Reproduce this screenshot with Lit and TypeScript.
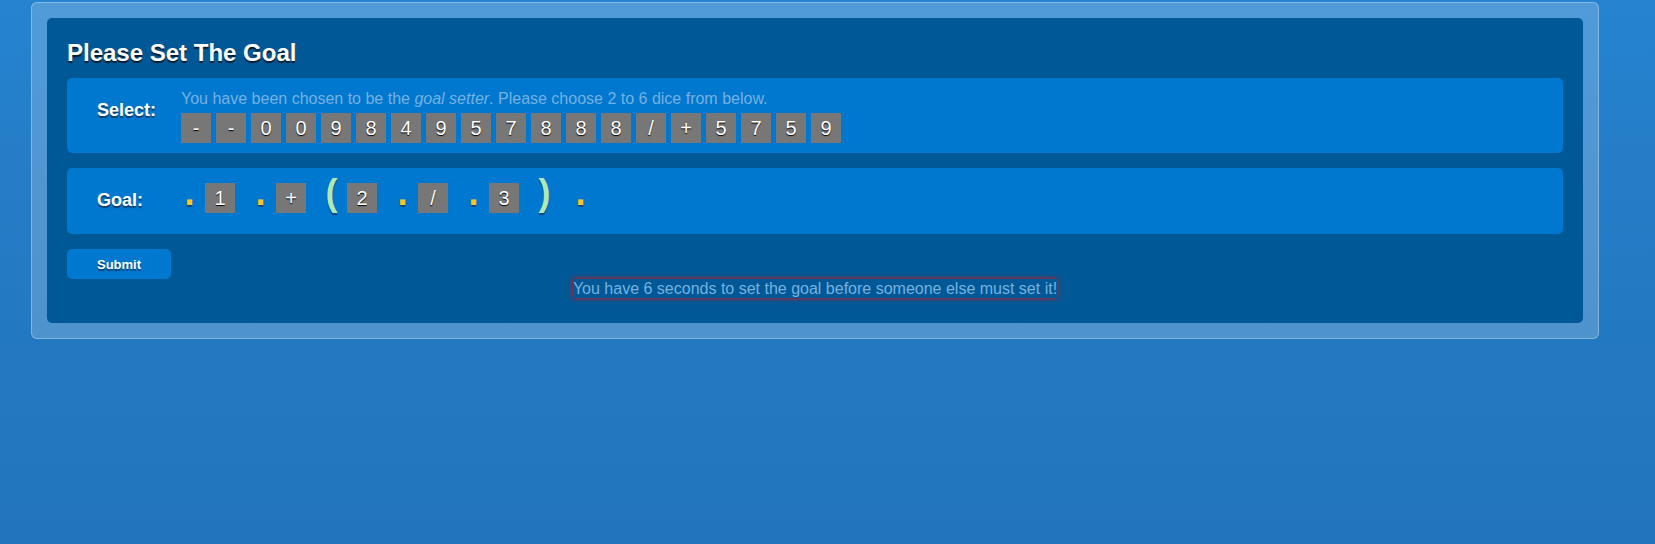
import { LitElement, html, css } from "lit";
import { customElement, state } from "lit/decorators.js";

type Part = { kind: "die" | "dot" | "paren"; text: string };

const DICE = ["-", "-", "0", "0", "9", "8", "4", "9", "5", "7", "8", "8", "8", "/", "+", "5", "7", "5", "9"];

const GOAL: Part[] = [
  { kind: "dot", text: "." },
  { kind: "die", text: "1" },
  { kind: "dot", text: "." },
  { kind: "die", text: "+" },
  { kind: "paren", text: "(" },
  { kind: "die", text: "2" },
  { kind: "dot", text: "." },
  { kind: "die", text: "/" },
  { kind: "dot", text: "." },
  { kind: "die", text: "3" },
  { kind: "paren", text: ")" },
  { kind: "dot", text: "." },
];

@customElement("app-root")
export class AppRoot extends LitElement {
  @state() private seconds = 6;

  static styles = css`
    :host {
      display: block;
      box-sizing: border-box;
      min-height: 100vh;
      padding: 2px 56px 20px 31px;
      background: linear-gradient(#2583cf 0, #2581cd 70px, #267cc6 170px, #2379c1 340px, #2275bd 100%);
      font: 16px/18px "Liberation Sans", Arial, sans-serif;
      color: #76b1e0;
    }
    .frame {
      padding: 15px;
      border: 1px solid rgba(255, 255, 255, 0.3);
      border-radius: 6px;
      background: rgba(255, 255, 255, 0.2);
    }
    .panel {
      padding: 20px 20px 25px;
      border-radius: 5px;
      background: #005996;
    }
    h1 {
      margin: 0 0 10px;
      font-size: 24px;
      line-height: 30px;
      color: #fff;
      text-shadow: 0 2px 1px rgba(0, 0, 0, 0.7);
    }
    .row {
      display: grid;
      grid-template-columns: 84px 1fr;
      padding: 10px 30px;
      margin-bottom: 15px;
      border-radius: 5px;
      background: #0078d0;
    }
    .label {
      margin: 0;
      padding-top: 10px;
      font-size: 18px;
      line-height: 24px;
      color: #fff;
      text-shadow: 0 2px 1px rgba(0, 0, 0, 0.5);
    }
    .hint {
      margin: 0 0 4px;
      line-height: 21px;
    }
    .dice {
      display: flex;
      flex-wrap: wrap;
      gap: 5px;
    }
    button {
      margin: 0;
      padding: 0;
      border: 0;
      font-family: inherit;
      cursor: pointer;
    }
    .die {
      width: 30px;
      height: 30px;
      background: #777;
      color: #fff;
      font-size: 20px;
      line-height: 30px;
      text-shadow: 0 1px 1px #000;
    }
    .goal {
      display: flex;
      flex-wrap: wrap;
      gap: 7px;
      padding: 5px 0 11px;
    }
    .slot {
      box-sizing: border-box;
      width: 17px;
      height: 30px;
      padding-bottom: 10px;
      margin-left: 10px;
      background: none;
      font-size: 36px;
      font-weight: bold;
      line-height: 20px;
      text-shadow: 0 2px 1px rgba(0, 0, 0, 0.4);
    }
    .slot:first-child {
      margin-left: 0;
    }
    .slot + .slot {
      margin-left: 12px;
    }
    .dot {
      color: #fdc422;
    }
    .paren {
      color: #b0e8b4;
    }
    .submit {
      display: block;
      height: 30px;
      padding: 0 30px;
      border-radius: 5px;
      background: #0078d0;
      color: #fff;
      font-size: 13px;
      font-weight: bold;
      text-shadow: 0 2px 1px rgba(0, 0, 0, 0.5);
    }
    .timer {
      display: block;
      width: fit-content;
      margin: 0 auto;
      line-height: 19px;
      box-shadow: 0 0 5px #f00;
    }
  `;

  private renderPart(p: Part) {
    return p.kind === "die"
      ? html`<button type="button" class="die">${p.text}</button>`
      : html`<button type="button" class="slot ${p.kind}">${p.text}</button>`;
  }

  render() {
    return html`
      <main class="frame">
        <form class="panel" @submit=${(e: Event) => e.preventDefault()}>
          <h1>Please Set The Goal</h1>
          <section class="row">
            <h2 class="label">Select:</h2>
            <div>
              <p class="hint">
                You have been chosen to be the <em>goal setter</em>. Please choose 2 to 6 dice from below.
              </p>
              <div class="dice">
                ${DICE.map((d) => html`<button type="button" class="die">${d}</button>`)}
              </div>
            </div>
          </section>
          <section class="row">
            <h2 class="label">Goal:</h2>
            <div class="goal">${GOAL.map((p) => this.renderPart(p))}</div>
          </section>
          <button type="submit" class="submit">Submit</button>
          <output class="timer">You have ${this.seconds} seconds to set the goal before someone else must set it!</output>
        </form>
      </main>
    `;
  }
}
